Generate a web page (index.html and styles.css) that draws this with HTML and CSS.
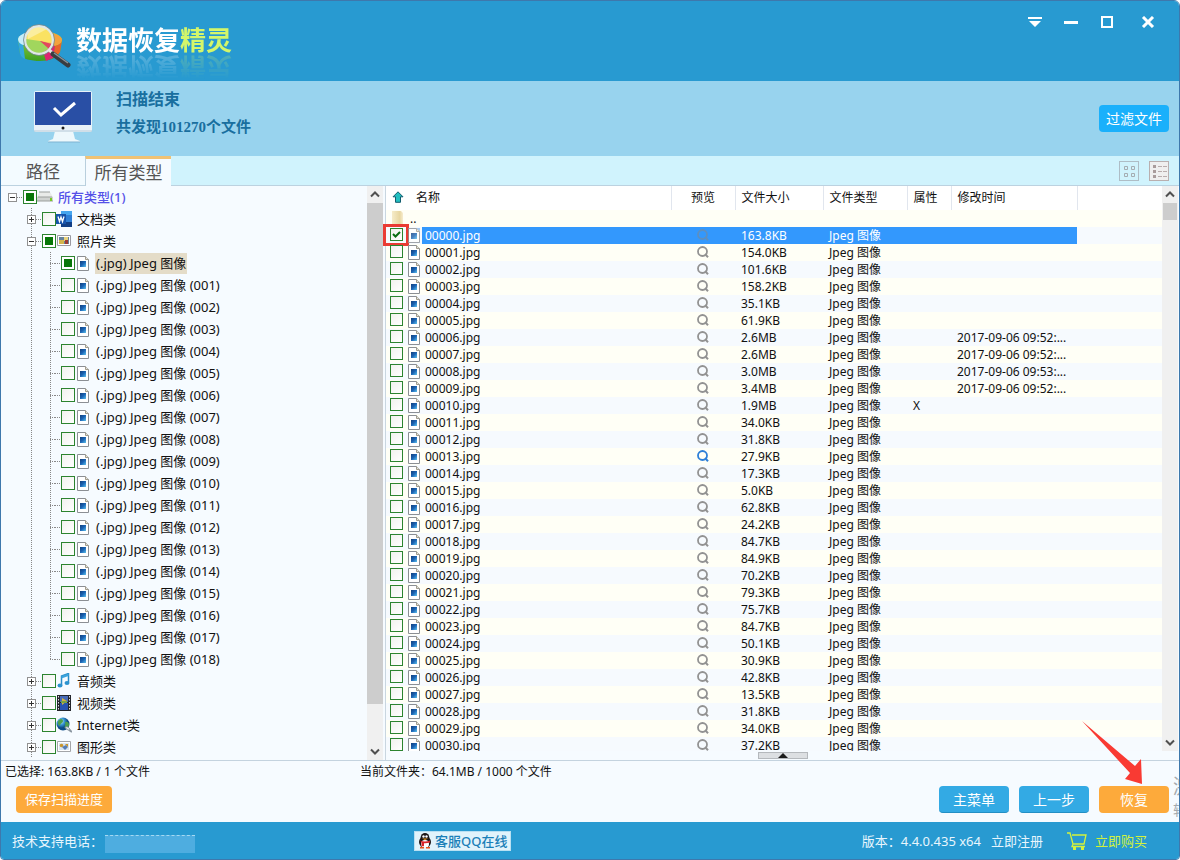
FILE: index.html
```html
<!DOCTYPE html>
<html lang="zh-CN">
<head>
<meta charset="utf-8">
<title>数据恢复精灵</title>
<link rel="stylesheet" href="styles.css">
</head>
<body>
<svg class="defs" aria-hidden="true">
  <defs>
    <linearGradient id="photo" x1="0" y1="0" x2="1" y2="1"><stop offset="0" stop-color="#123f7c"/><stop offset=".5" stop-color="#1b64b4"/><stop offset="1" stop-color="#5cc2ee"/></linearGradient>
    <linearGradient id="fold" x1="0" x2="1"><stop offset="0" stop-color="#f6ecc9"/><stop offset=".7" stop-color="#e8d7a2"/><stop offset="1" stop-color="#f7edd0"/></linearGradient>
    <linearGradient id="green" x1="0" y1="0" x2="0" y2="1"><stop offset="0" stop-color="#a6dc48"/><stop offset="1" stop-color="#3f9f20"/></linearGradient>
    <radialGradient id="globe" cx=".35" cy=".3"><stop offset="0" stop-color="#d7f4ff"/><stop offset=".5" stop-color="#3a9ad6"/><stop offset="1" stop-color="#0c4a86"/></radialGradient>
  </defs>
  <symbol id="i-jpg" viewBox="0 0 12 15"><path d="M.5.5h8l3 3v11H.5z" fill="#fff" stroke="#8b8f94"/><path d="M8.500.5v3h3" fill="#e8e4d8" stroke="#a09c8c"/><path d="M3 5h6v6H3z" fill="url(#photo)"/></symbol>
  <symbol id="i-find" viewBox="0 0 12 12"><circle cx="5.500" cy="5.500" r="4.500" fill="none" stroke="currentColor" stroke-width="1.800"/><path d="M8 8l3 3.200" stroke="currentColor" stroke-width="2"/></symbol>
  <symbol id="i-drive" viewBox="0 0 16 16"><path d="M3 3h10l3 5H0z" fill="#e9ebe9"/><path d="M0 8h16v4H0z" fill="#d0d3d1"/><path d="M2 3h11M1 8h14M0 12h16" stroke="#9b9f9d"/><path d="M13 9h2v3h-2z" fill="#79c927"/></symbol>
  <symbol id="i-word" viewBox="0 0 16 16"><path d="M5 0h11v16H5z" fill="#2f7fd6"/><path d="M5 0h11v4H5z" fill="#45a5ee"/><path d="M5 11h11v5H5z" fill="#113e85"/><path d="M0 3h10v10H0z" fill="#1753aa"/><path d="M2 5.500l1.500 5L5 6l1.500 4.500 1.500-5" fill="none" stroke="#fff" stroke-width="1.300"/></symbol>
  <symbol id="i-photo" viewBox="0 0 16 16"><path d="M1.500 2.500h13v10h-13z" fill="#fff" stroke="#9a9aa2"/><path d="M3 4h10v7H3z" fill="#66829b"/><path d="M3 7h5v4H3z" fill="#d3b64d"/><path d="M8 4h4v4H8z" fill="#e8d27e"/><path d="M9 7h3v4H9z" fill="#9f3d35"/></symbol>
  <symbol id="i-music" viewBox="0 0 16 16"><path d="M5.500 12V3l7-2.500v9" fill="none" stroke="#288cc7" stroke-width="1.500"/><path d="M5.500 3l7-2.500V3l-7 2.500z" fill="#3ba4dd"/><ellipse cx="4" cy="12.500" rx="2.500" ry="2" fill="#2b93cf"/><ellipse cx="11" cy="10" rx="2.500" ry="2" fill="#2b93cf"/></symbol>
  <symbol id="i-video" viewBox="0 0 16 16"><path d="M1 0h14v16H1z" fill="#22252b"/><path d="M4 1h8v6H4z" fill="#476bb7"/><path d="M4 8h8v7H4z" fill="#2752b1"/><path d="M6 3l5 3-5 4z" fill="#d6b43b"/><path d="M5 6h6v2H5z" fill="#77a347"/><path d="M2.500 1v15M13.500 1v15" stroke="#ddd" stroke-dasharray="1.500 1.500"/></symbol>
  <symbol id="i-net" viewBox="0 0 16 16"><circle cx="7" cy="7" r="6.500" fill="url(#globe)"/><path d="M3 3c2-2 4-1 4 1S4 6 4 9c-2-1-3-4-1-6zM9 5c3-1 4 1 4 3s-3 4-4 3 1-3 0-6z" fill="#4c9e4f"/><path d="M9 10.500c2-2 4 0 5 2s-4 0-5-2z" fill="#dbe3ea" stroke="#7b8994"/><path d="M13 13l3 2" stroke="#8a96a0" stroke-width="2"/></symbol>
  <symbol id="i-graph" viewBox="0 0 16 16"><path d="M1.500 2.500h13v10h-13z" fill="#fff" stroke="#a3a5a8"/><path d="M3 4h10v7H3z" fill="#d8e5f0"/><circle cx="5.500" cy="6.500" r="1.800" fill="#c9962c"/><path d="M6 8l4-2 2 2-3 3z" fill="#557db4"/><path d="M9 5h3v3z" fill="#c9962c"/></symbol>
</svg>

<div class="window">
  <header class="titlebar">
    <div class="brand">
      <svg class="brand-mark" viewBox="0 0 60 48" aria-hidden="true">
        <path d="M2 18c0-5 10-9 22-9s22 4 22 9l-2 12c-2 6-11 9-20 9S6 37 4 32z" fill="url(#green)"/>
        <path d="M2 18l2 14c1 3 3 4 5 5L7 21z" fill="#34a9dd"/><path d="M2 17c1-4 6-6 11-7l11 9-17 4c-3-1-5-3-5-6z" fill="#c7eefa"/>
        <path d="M31 10c9 1 15 4 15 8 0 3-3 5-7 6L24 19z" fill="#f4a23d"/><path d="M46 18l-2 12c-1 2-4 4-7 5l2-11c4-1 7-3 7-6z" fill="#e8652a"/>
        <path d="M24 19l15 5-2 12-7 3-3-10z" fill="#dd2470"/>
        <path d="M12 9l12 10 9 6c-2 6-14 9-20 3-5-5-5-14-1-19z" fill="#8fcf3f"/>
        <path d="M11 9c4-7 16-8 23 0 3 4 3 8 2 12L24 19 10 17z" fill="#f9dd45"/><path d="M11 9c4-7 14-7 20-2L12 17z" fill="#fbeb8c"/>
        <path d="M24 19l12 3-3 5z" fill="#dd2440"/>
        <circle cx="23" cy="18" r="14" fill="#fff" fill-opacity=".16" stroke="#dfe7e6" stroke-width="2.500"/>
        <circle cx="23" cy="18" r="15.500" fill="none" stroke="#71858c" stroke-width=".8"/>
        <path d="M33 28l5 4" stroke="#e5e5e5" stroke-width="3"/><path d="M37 32l15 11" stroke="#383d40" stroke-width="5" stroke-linecap="round"/><path d="M38 31l14 10" stroke="#8b9296" stroke-width="1.500"/>
      </svg>
      <h1 class="brand-name">数据恢复<span class="brand-accent">精灵</span></h1>
    </div>
    <nav class="window-controls">
      <button type="button" aria-label="菜单"><svg viewBox="0 0 14 12"><path d="M0 1h14v2H0zM1 5h12L7 11z" fill="#fff"/></svg></button>
      <button type="button" aria-label="最小化"><svg viewBox="0 0 14 12"><path d="M0 5h14v3H0z" fill="#fff"/></svg></button>
      <button type="button" aria-label="最大化"><svg viewBox="0 0 14 12"><path d="M2 1h10v10H2z" fill="none" stroke="#fff" stroke-width="2"/></svg></button>
      <button type="button" aria-label="关闭"><svg viewBox="0 0 14 12"><path d="M2 1l10 10M12 1L2 11" fill="none" stroke="#fff" stroke-width="3"/></svg></button>
    </nav>
  </header>

  <section class="scan">
    <svg class="monitor" viewBox="0 0 60 54" aria-hidden="true">
      <path d="M22 41h18l2 8 5 2v1H15v-1l5-2z" fill="#eef8fc"/><path d="M15 52h32" stroke="#7fb4d2"/>
      <rect x="1" y="1" width="58" height="41" rx="2" fill="#e9f2f8"/><path d="M2 2h56v33H2z" fill="#294fa5"/><path d="M1 41h58" stroke="#b8cbd8"/>
      <circle cx="30" cy="38" r="1.500" fill="#1b1b1b"/><path d="M21 18l7 7 14-12" fill="none" stroke="#fff" stroke-width="3"/>
    </svg>
    <div class="scan-text"><p class="scan-title">扫描结束</p><p class="scan-count">共发现101270个文件</p></div>
    <button type="button" class="btn btn-filter">过滤文件</button>
  </section>

  <div class="tabs">
    <button type="button" class="tab">路径</button>
    <button type="button" class="tab tab-active">所有类型</button>
    <div class="views">
      <button type="button" class="view" aria-label="图标视图"><svg viewBox="0 0 18 18"><path d="M4.500 4.500h3v3h-3zM11.500 4.500h3v3h-3zM4.500 11.500h3v3h-3zM11.500 11.500h3v3h-3z" fill="none" stroke="#a5adb2"/></svg></button>
      <button type="button" class="view view-on" aria-label="列表视图"><svg viewBox="0 0 18 18"><path d="M3 3h3v3H3zM3 8h3v3H3zM3 13h3v3H3z" fill="#a99c9c"/><path d="M8 4.500h9M8 9.500h9M8 14.500h9" stroke="#b9adad" stroke-dasharray="4 1"/></svg></button>
    </div>
  </div>

  <main class="main">
    <section class="tree-pane">
      <ul class="tree" id="tree"></ul>
      <div class="scroll scroll-tree"><svg viewBox="0 0 16 16"><path d="M4 10l4-4 4 4" /></svg><span class="thumb"></span><svg viewBox="0 0 16 16"><path d="M4 6l4 4 4-4"/></svg></div>
    </section>
    <section class="list-pane">
      <div class="list-row">
        <div class="list">
          <table class="files">
            <colgroup><col class="c-name"><col class="c-find"><col class="c-size"><col class="c-type"><col class="c-attr"><col class="c-time"><col></colgroup>
            <thead><tr>
              <th><span class="name-head"><svg class="up" viewBox="0 0 12 12"><path d="M6 .8l5 5H8.500v5.500h-5V5.800H1z" fill="#22bfc0" stroke="#125c6e"/></svg>名称</span></th>
              <th class="find">预览</th><th>文件大小</th><th>文件类型</th><th>属性</th><th>修改时间</th><th class="rest"></th>
            </tr></thead>
            <tbody id="files"></tbody>
          </table>
        </div>
        <div class="scroll scroll-list"><svg viewBox="0 0 16 16"><path d="M4 10l4-4 4 4"/></svg><span class="thumb"></span><svg viewBox="0 0 16 16"><path d="M4 6l4 4 4-4"/></svg></div>
      </div>
      <button type="button" class="drawer" aria-label="展开预览"><svg viewBox="0 0 48 5"><path d="M19 5h10l-5-5z" fill="#1b1b1b"/></svg></button>
    </section>
  </main>

  <section class="status">
    <div class="status-text"><p class="status-selected">已选择: 163.8KB / 1 个文件</p><p>当前文件夹：64.1MB / 1000 个文件</p></div>
    <div class="actions">
      <button type="button" class="btn btn-save">保存扫描进度</button>
      <button type="button" class="btn btn-blue">主菜单</button>
      <button type="button" class="btn btn-blue">上一步</button>
      <button type="button" class="btn btn-orange">恢复<svg class="arrow" viewBox="0 0 64 66" aria-hidden="true"><path d="M1 1l53 45 6-7 1 25-17-5 5-6z" fill="#f93a33"/></svg></button>
    </div>
    <div class="edge" aria-hidden="true"><span class="edge-big">激</span><span>转</span></div>
  </section>

  <footer class="footer">
    <div class="phone">技术支持电话：<span class="masked"></span></div>
    <a class="qq" href="#"><svg viewBox="0 0 14 16" aria-hidden="true"><ellipse cx="7" cy="9" rx="6" ry="6" fill="#1b1517"/><ellipse cx="7" cy="4.500" rx="4.300" ry="4.500" fill="#1b1517"/><ellipse cx="7" cy="11" rx="4" ry="4" fill="#fff"/><circle cx="5.500" cy="3.500" r="1.200" fill="#fff"/><circle cx="8.500" cy="3.500" r="1.200" fill="#fff"/><path d="M4 5.500h6L7 7z" fill="#f0a020"/><path d="M2 7.500q5 2 10 0v2q-3 1-6 .8v3H3.500V9.500z" fill="#d8232a"/><path d="M2 14h4v1.500H2zM8 14h4v1.500H8z" fill="#e9521c"/></svg>客服QQ在线</a>
    <div class="about"><span>版本：4.4.0.435 x64</span><a class="register" href="#">立即注册</a><a class="buy" href="#"><svg viewBox="0 0 20 18" aria-hidden="true"><path d="M0 1h3l3 11h11l2-9H5M6 12l-1 2.500h13" fill="none" stroke="currentColor" stroke-width="1.300"/><path d="M6 15h3v3H6zM14 15h3v3h-3z" fill="currentColor"/></svg>立即购买</a></div>
  </footer>
</div>
<script src="app.js"></script>
</body>
</html>
```
FILE: styles.css
```css
* { box-sizing: border-box; }
html, body { height: 100%; margin: 0; }
body { font: 12px/17px "Noto Sans", "Noto Sans CJK SC", sans-serif; color: #111; background: #fff; }
button { font: inherit; border: 0; padding: 0; background: none; cursor: pointer; }
h1, p, ul { margin: 0; padding: 0; }
ul { list-style: none; }
a { color: inherit; text-decoration: none; }
svg { display: block; flex: none; }
.defs { position: absolute; width: 0; height: 0; }

.window { height: 100%; display: flex; flex-direction: column; overflow: hidden; border: 1px solid #3e78ac; border-radius: 6px 6px 4px 4px; background: #f6fbff; }

.titlebar { flex: none; height: 80px; display: flex; justify-content: space-between; align-items: flex-start; padding: 0 24px 0 15px; background: #289ad1; }
.brand { display: flex; align-items: flex-start; padding-top: 21px; }
.brand-mark { width: 60px; height: 48px; }
.brand-name { font-size: 26px; line-height: 36px; font-weight: 700; color: #fff; -webkit-box-reflect: below -8px linear-gradient(transparent 20%, rgba(0, 0, 0, 0.28)); }
.brand-accent { color: #d4f66a; }
.window-controls { display: flex; gap: 22px; padding-top: 15px; }
.window-controls svg { width: 14px; height: 12px; }
.window-controls button:last-child { margin-left: 5px; }

.scan { flex: none; height: 75px; display: flex; padding: 9px 10px 0 32px; background: #98d3ee; }
.monitor { width: 60px; height: 54px; }
.scan-text { flex: 1; padding: 0 0 0 23px; font-family: "Liberation Serif", "Noto Sans CJK SC", serif; font-weight: 700; color: #196f9f; }
.scan-title { font-size: 16px; line-height: 20px; }
.scan-count { font-size: 15px; line-height: 20px; margin-top: 7px; }

.btn { height: 27px; border-radius: 4px; color: #fff; font-size: 14px; line-height: 25px; }
.btn-filter { width: 70px; margin-top: 15px; background: #1ab0fb; }
.btn-save { padding: 0 9px; margin-right: auto; font-size: 13px; background: #fdaa3b; }
.btn-blue { width: 70px; background: #33aae4; border-bottom: 1px solid #238fc4; }
.btn-orange { position: relative; width: 70px; background: #fdaa3b; }

.tabs { flex: none; height: 30px; display: flex; background: #d0f3fd; border-bottom: 1px solid #bcd2e0; }
.tab { width: 84px; background: #f3fbff; color: #555; font-size: 17px; line-height: 26px; border-top: 3px solid #f3fbff; }
.tab-active { width: 86px; height: 30px; border-top-color: #f0c274; border-left: 1px solid #b9cfdd; background: #f6fbff; }
.views { margin-left: auto; display: flex; gap: 10px; padding: 5px 10px 0 0; }
.view { width: 20px; height: 20px; border: 1px solid #aebdc6; }
.view svg { width: 18px; height: 18px; }
.view-on { background: #efefef; border-color: #b9afaf; }

.main { flex: 1; min-height: 0; display: flex; }
.tree-pane { flex: none; width: 382px; display: flex; overflow: hidden; }
.tree { flex: 1; font-size: 13px; line-height: 22px; overflow: hidden; }
.node { position: relative; display: flex; align-items: center; height: 22px; padding-left: 7px; }
.node-1 { padding-left: 26px; }
.node-2 { padding-left: 45px; }
.expander { position: relative; width: 9px; height: 9px; border: 1px solid #919191; background: #fff; }
.expander svg { width: 7px; height: 7px; }
.blank { width: 5px; height: 1px; margin-left: 4px; background: repeating-linear-gradient(90deg, #888 0 1px, transparent 1px 2px); }
.dots { width: 6px; height: 1px; background: repeating-linear-gradient(90deg, #888 0 1px, transparent 1px 2px); }
.rail::before { content: ""; position: absolute; left: 30px; top: 0; bottom: 0; width: 1px; background: repeating-linear-gradient(#888 0 1px, transparent 1px 2px); }
.node-2::after { content: ""; position: absolute; left: 49px; top: 0; bottom: 0; width: 1px; background: repeating-linear-gradient(#888 0 1px, transparent 1px 2px); }
.node-last::after { bottom: 11px; }
.node-icon { width: 16px; height: 16px; margin: 0 4px 0 0; }
.node-2 .node-icon { width: 12px; height: 15px; margin: 0 6px 0 2px; }
.node-label { padding: 0 1px; line-height: 21px; }
.node-0 .node-label { color: #5450e8; font-weight: 500; }
.node-on .node-label { background: #e4dcc8; }

.check { appearance: none; flex: none; width: 14px; height: 14px; margin: 0; border: 1px solid #2c842f; background: linear-gradient(135deg, #f1f2ee, #fff); }
.check-part { background: linear-gradient(#087708, #087708) center / 8px 8px no-repeat #fff; }

.scroll { flex: none; width: 16px; display: flex; flex-direction: column; background: #f0f0f0; }
.scroll svg { width: 16px; height: 17px; fill: none; stroke: #505050; stroke-width: 2; }
.scroll .thumb { background: #cdcdcd; }
.scroll svg:last-child { margin-top: auto; }
.scroll-tree .thumb { height: 92%; max-height: 501px; }
.scroll-list { margin-right: 1px; }
.scroll-list .thumb { height: 17px; margin: 0 1px; }

.list-pane { flex: 1; min-width: 0; display: flex; flex-direction: column; margin-left: 2px; border-left: 1px solid #c9d6e0; }
.list-row { flex: 1; min-height: 0; display: flex; }
.list { flex: 1; min-width: 0; overflow-x: visible; overflow-y: clip; background: #fff; }
.files { width: 100%; table-layout: fixed; border-collapse: collapse; }
.c-name { width: 285px; }
.c-find { width: 64px; }
.c-size { width: 88px; }
.c-type { width: 84px; }
.c-attr { width: 44px; }
.c-time { width: 126px; }
.files th { height: 24px; padding: 0 0 2px 6px; text-align: left; font-weight: 400; white-space: nowrap; background: #fff; border-right: 1px solid #e1e6ee; }
.files th.find { text-align: center; padding: 0 0 2px; }
.files th.rest { border: 0; }
.name-head { display: flex; align-items: center; gap: 12px; }
.up { width: 12px; height: 12px; }
.files td { height: 17px; padding: 0 0 0 6px; white-space: nowrap; }
.files td.name { padding: 0 0 0 4px; }
.files tbody tr { background: #fffff6; }
.files tbody tr:nth-child(even) { background: #f6fafe; }
.name-cell { position: relative; display: flex; align-items: center; height: 17px; }
.name-cell .check { height: 13px; width: 13px; margin-bottom: 2px; }
.file-icon { width: 12px; height: 15px; margin: 0 2px 0 5px; }
.file-label { flex: 1; padding-left: 3px; }
.find-icon { width: 12px; height: 12px; margin: 0 auto; color: #929292; }
.files td.find { padding: 0 0 2px; }
.files .find-blue { color: #2d7fd8; }
.selected .file-label, .selected td:nth-child(n+2):nth-child(-n+6) { background: #3398fd; color: #fff; }
.selected .file-icon { background: #8fbdf0; opacity: 0.8; }
.files .selected .find-icon { color: #5d8fc0; }
.check-tick { width: 9px; height: 9px; position: absolute; left: 2px; top: 3px; pointer-events: none; }
.mark { position: absolute; left: -7px; top: -3px; width: 26px; height: 22px; border: 3px solid #ea3b33; pointer-events: none; }
.folder { width: 12px; height: 15px; margin: 0 6px 0 2px; }
.drawer { flex: none; display: block; width: 50px; height: 7px; margin: 1px auto 1px; background: #dcdfe2; border: 1px solid #b4b8bc; }
.drawer svg { width: 48px; height: 5px; }

.status { position: relative; flex: none; height: 62px; border-top: 1px solid #c4d3df; padding: 2px 10px 0 4px; }
.status-text { display: flex; }
.status-selected { width: 355px; }
.actions { display: flex; gap: 10px; padding: 6px 0 0 11px; }
.arrow { position: absolute; left: -18px; bottom: 27px; width: 64px; height: 66px; pointer-events: none; }
.edge { position: absolute; right: 0; top: 14px; width: 6px; overflow: hidden; color: #a3a9ad; font-size: 14px; line-height: 22px; }
.edge span { display: block; width: 22px; }
.edge .edge-big { font-size: 20px; line-height: 24px; }

.footer { flex: none; height: 37px; display: grid; grid-template-columns: 402px auto 1fr; align-items: center; padding: 1px 32px 0 11px; background: #289ad1; color: #e8f6fd; font-size: 13px; line-height: 18px; }
.phone { display: flex; align-items: center; }
.masked { width: 90px; height: 18px; margin: 6px 0 0 2px; background: #4eade0; border-top: 1px dashed #a6d9f2; }
.qq { display: flex; align-items: center; gap: 3px; padding: 0 3px; height: 20px; background: #e1f3fb; border: 1px solid #b9e0f2; color: #1b7fb8; font-weight: 500; }
.qq svg { width: 14px; height: 16px; }
.about { display: flex; align-items: center; justify-content: flex-end; }
.register { margin-left: 10px; }
.buy { display: flex; align-items: center; gap: 8px; margin-left: 24px; color: #d3f23c; }
.buy svg { width: 20px; height: 18px; }
```
FILE: app.js
```js
const icon = (id, cls) => `<svg class="${cls}" aria-hidden="true"><use href="#i-${id}"/></svg>`;

const nodes = [
  [0, '所有类型(1)', 'drive', 'open', true],
  [1, '文档类', 'word', 'closed'],
  [1, '照片类', 'photo', 'open', true],
  [2, '(.jpg) Jpeg 图像', 'jpg', '', true]
];
for (let i = 1; i <= 18; i++) nodes.push([2, `(.jpg) Jpeg 图像 (${String(i).padStart(3, '0')})`, 'jpg', '']);
nodes.push([1, '音频类', 'music', 'closed'], [1, '视频类', 'video', 'closed'], [1, 'Internet类', 'net', 'closed'], [1, '图形类', 'graph', 'closed']);

document.getElementById('tree').innerHTML = nodes.map(([level, label, pic, state, part], i) => {
  const sign = state === 'open' ? 'M1 3.5h5' : 'M1 3.5h5M3.500 1v5';
  const lead = state
    ? `<button type="button" class="expander" aria-label="${label}"><svg viewBox="0 0 7 7"><path d="${sign}" stroke="#333"/></svg></button>`
    : '<span class="blank"></span>';
  const cls = ['node', `node-${level}`];
  if (level) cls.push('rail');
  if (i === 3) cls.push('node-on');
  if (i === 21) cls.push('node-last');
  return `<li class="${cls.join(' ')}">${lead}<span class="dots"></span><input type="checkbox" id="n${i}" class="check${part ? ' check-part' : ''}">${icon(pic, 'node-icon')}<label class="node-label" for="n${i}">${label}</label></li>`;
}).join('');

const sizes = ['163.8KB', '154.0KB', '101.6KB', '158.2KB', '35.1KB', '61.9KB', '2.6MB', '2.6MB', '3.0MB', '3.4MB', '1.9MB', '34.0KB', '31.8KB', '27.9KB', '17.3KB', '5.0KB', '62.8KB', '24.2KB', '84.7KB', '84.9KB', '70.2KB', '79.3KB', '75.7KB', '84.7KB', '50.1KB', '30.9KB', '42.8KB', '13.5KB', '31.8KB', '34.0KB', '37.2KB'];
const times = { 6: '2017-09-06 09:52:...', 7: '2017-09-06 09:52:...', 8: '2017-09-06 09:53:...', 9: '2017-09-06 09:52:...' };

const parent = '<tr><td class="name"><div class="name-cell"><svg class="folder" viewBox="0 0 12 15"><path d="M0 0h9l2 2v13H0z" fill="url(#fold)"/></svg>..</div></td><td></td><td></td><td></td><td></td><td></td><td></td></tr>';
document.getElementById('files').innerHTML = parent + sizes.map((size, i) => {
  const name = `000${String(i).padStart(2, '0')}.jpg`;
  const tick = i ? '' : '<svg class="check-tick" viewBox="0 0 9 9"><path d="M1 4l2.500 2.500L8 2" fill="none" stroke="#0b6d12" stroke-width="2"/></svg><span class="mark"></span>';
  return `<tr${i ? '' : ' class="selected"'}><td class="name"><div class="name-cell"><input type="checkbox" id="f${i}" class="check"${i ? '' : ' checked'}>${tick}${icon('jpg', 'file-icon')}<label class="file-label" for="f${i}">${name}</label></div></td><td class="find">${icon('find', 'find-icon' + (i === 13 ? ' find-blue' : ''))}</td><td>${size}</td><td>Jpeg 图像</td><td>${i === 10 ? 'X' : ''}</td><td>${times[i] || ''}</td><td></td></tr>`;
}).join('');
```
